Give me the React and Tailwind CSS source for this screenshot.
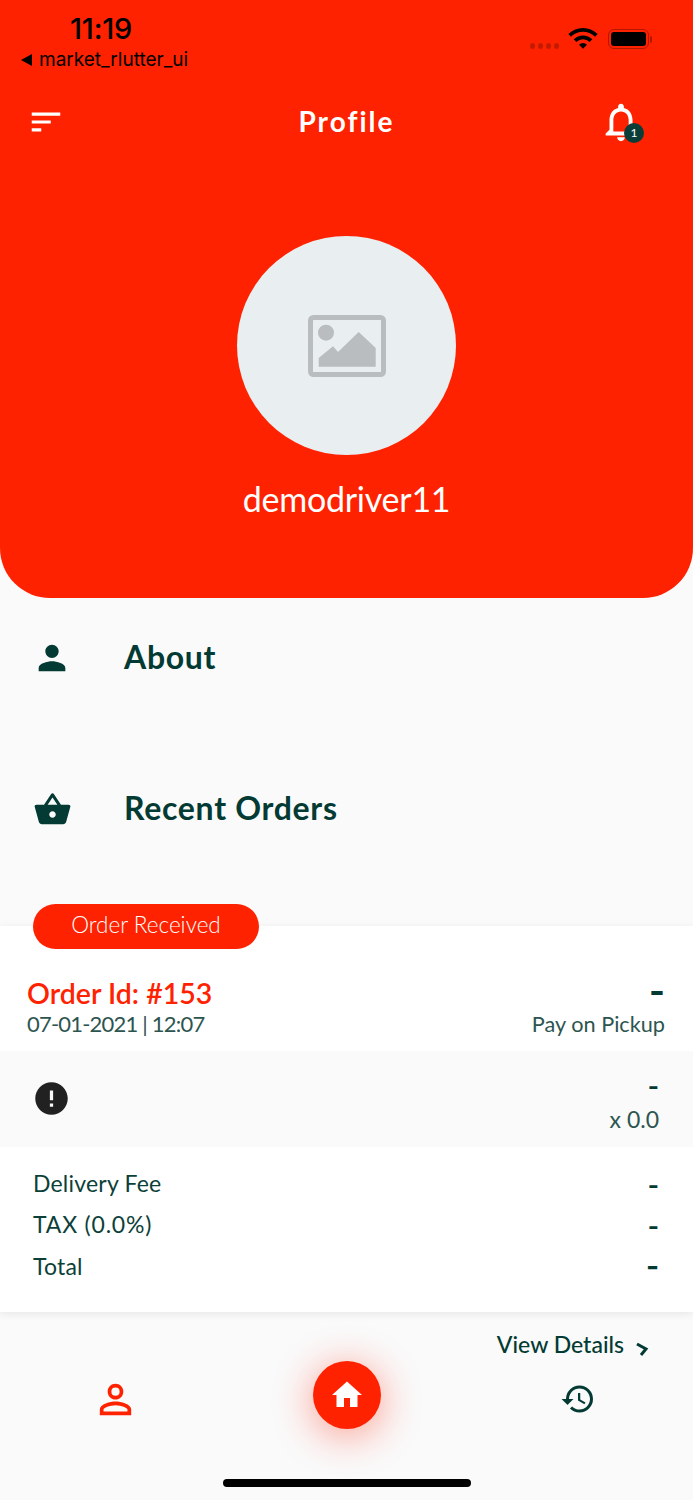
import React from 'react';
import {
  MdPerson,
  MdShoppingBasket,
  MdError,
  MdPersonOutline,
  MdHome,
  MdHistory,
  MdSort,
  MdWifi,
  MdOutlineNotifications,
} from 'react-icons/md';

const StatusBar = () => {
  return (
    <div className="h-[83px] flex justify-between pl-[21px] pr-[41px] text-black">
      <div className="flex flex-col">
        <div className="pl-[49px] pt-[13px] font-['Inter',sans-serif] text-[29px] leading-[32px] font-medium tracking-[-0.2px]">11:19</div>
        <div className="flex items-center gap-[7px] mt-[4px]">
          <div className="w-0 h-0 border-y-[6px] border-y-transparent border-r-[11px] border-r-black"></div>
          <span className="font-['Inter',sans-serif] text-[19px] leading-[22px]">market_rlutter_ui</span>
        </div>
      </div>
      <div className="flex items-start pt-[25px]">
        <div className="flex gap-[3px] mt-[18px] mr-[10px]">
          <div className="w-[5px] h-[6px] rounded-full bg-[#c41b00]"></div>
          <div className="w-[5px] h-[6px] rounded-full bg-[#c41b00]"></div>
          <div className="w-[5px] h-[6px] rounded-full bg-[#c41b00]"></div>
          <div className="w-[5px] h-[6px] rounded-full bg-[#c41b00]"></div>
        </div>
        <MdWifi className="w-[32px] h-[32px] -mt-[3px] -ml-[2px] mr-[9px]" />
        <div className="flex items-center mt-[4px]">
          <div className="w-[41px] h-[20px] rounded-[6px] border border-[#b01800] p-[2px]">
            <div className="w-full h-full rounded-[3px] bg-black"></div>
          </div>
          <div className="w-[2px] h-[7px] ml-[1px] rounded-r bg-[#b01800]"></div>
        </div>
      </div>
    </div>
  );
};

const PlaceholderImage = () => {
  return (
    <svg viewBox="0 0 78 62" className="w-[78px] h-[62px] text-[#b9bdbf]" fill="currentColor">
      <rect x="2.5" y="2.5" width="73" height="57" rx="3" fill="none" stroke="currentColor" strokeWidth="5" />
      <circle cx="18" cy="17.7" r="8" />
      <polygon points="10.7,51.7 10.7,43 25,31.3 30,37 50.7,17 67.7,33 67.7,51.7" />
    </svg>
  );
};

const Header = () => {
  return (
    <div className="h-[598px] bg-[#ff2200] rounded-b-[50px] flex flex-col">
      <StatusBar />
      <div className="grid grid-cols-[1fr_auto_1fr] items-center h-[78px] px-[27px]">
        <MdSort className="w-[38px] h-[38px] text-white" />
        <div className="font-['Lato',sans-serif] text-[28px] font-bold text-white tracking-[2px] -translate-y-[1px]">Profile</div>
        <div className="relative justify-self-end mr-[22px]">
          <MdOutlineNotifications className="w-[46px] h-[46px] text-white" />
          <div className="absolute left-[26px] top-[24px] w-[20px] h-[20px] rounded-full bg-[#0a3d38] flex items-center justify-center font-['Lato',sans-serif] text-[12px] text-white">1</div>
        </div>
      </div>
      <div className="flex flex-col items-center mt-[75px]">
        <div className="w-[219px] h-[219px] rounded-full bg-[#e9eef1] flex items-center justify-center">
          <PlaceholderImage />
        </div>
        <div className="mt-[19px] font-['Lato',sans-serif] text-[34px] leading-[50px] tracking-[-0.25px] text-white">demodriver11</div>
      </div>
    </div>
  );
};

const SectionRow = ({ icon, title, className }) => {
  return (
    <div className={`flex items-center h-[60px] ${className}`}>
      <div className="w-[124px] flex justify-center pr-[20px]">{icon}</div>
      <div className="font-['Lato',sans-serif] text-[32px] font-bold tracking-[0.7px] -translate-y-[1px] text-[#033a33]">{title}</div>
    </div>
  );
};

const Dash = ({ className }) => {
  return <span className={`font-['Inter',sans-serif] font-bold text-[#033a33] ${className}`}>-</span>;
};

const FeeRow = ({ label, bold, dashClass, labelClass }) => {
  return (
    <div className="flex justify-between items-center h-[41.5px]">
      <span className={`font-['Lato',sans-serif] text-[23px] text-[#0d3f39] ${labelClass}`}>{label}</span>
      <Dash className={`${bold ? 'text-[28px]' : 'text-[24px]'} ${dashClass}`} />
    </div>
  );
};

const OrderCard = () => {
  return (
    <div>
      <div className="relative z-10 ml-[33px] w-[226px] h-[45px] pb-[4px] rounded-full bg-[#ff2200] flex items-center justify-center font-['Lato',sans-serif] text-[22.5px] font-light text-white -mb-[23px]">
        Order Received
      </div>
      <div className="bg-white shadow-[0_2px_8px_rgba(0,0,0,0.08)]">
        <div className="h-[125px] flex justify-between pl-[27px] pr-[28px] pt-[48px]">
          <div>
            <div className="font-['Lato',sans-serif] text-[28.5px] leading-[38px] font-semibold text-[#ff2200]">Order Id: #153</div>
            <div className="font-['Lato',sans-serif] text-[22px] leading-[24px] tracking-[-0.8px] text-[#2d5550]">07-01-2021 | 12:07</div>
          </div>
          <div className="flex flex-col items-end">
            <Dash className="text-[34px] leading-[36px] -translate-y-[1px]" />
            <div className="font-['Lato',sans-serif] text-[21.7px] leading-[30px] text-[#2d5550] -mt-[1px]">Pay on Pickup</div>
          </div>
        </div>
        <div className="h-[96px] bg-[#fafafa] flex items-center justify-between pl-[32px] pr-[34px]">
          <MdError className="w-[39px] h-[39px] text-[#212121] -translate-y-[1px]" />
          <div className="flex flex-col items-end pt-[10px]">
            <Dash className="text-[24px] leading-[32px] -translate-y-[1px]" />
            <div className="font-['Lato',sans-serif] text-[23px] leading-[34px] text-[#2d5550] -mt-[2px]">x 0.0</div>
          </div>
        </div>
        <div className="h-[165px] pl-[33px] pr-[34px] pt-[15px]">
          <FeeRow label="Delivery Fee" labelClass="tracking-[0.2px]" dashClass="translate-y-[3px]" />
          <FeeRow label="TAX (0.0%)" labelClass="tracking-[0.8px]" dashClass="translate-y-[3px]" />
          <FeeRow label="Total" labelClass="tracking-[0.2px]" bold />
        </div>
      </div>
    </div>
  );
};

const BottomNav = () => {
  return (
    <div className="flex flex-col">
      <div className="flex justify-end items-center h-[65px] pr-[43px]">
        <span className="font-['Lato',sans-serif] text-[23px] font-medium text-[#033a33]">View Details</span>
        <svg viewBox="0 0 14 14" className="w-[14px] h-[14px] ml-[12px] mt-[8px] text-[#033a33]" fill="none" stroke="currentColor" strokeWidth="3">
          <path d="M1 2 L10 7 L5 13" />
        </svg>
      </div>
      <div className="grid grid-cols-3 justify-items-center items-center -mt-[16px]">
        <MdPersonOutline className="w-[47px] h-[47px] mt-[8px] text-[#ff2200]" />
        <div className="w-[68px] h-[68px] rounded-full bg-[#ff2200] flex items-center justify-center shadow-[0_6px_40px_rgba(255,34,0,0.45)]">
          <MdHome className="w-[36px] h-[36px] text-white" />
        </div>
        <MdHistory className="w-[36px] h-[36px] mt-[8px] text-[#033a33]" />
      </div>
      <div className="mx-auto mt-[50px] w-[248px] h-[8px] rounded-full bg-black"></div>
    </div>
  );
};

export default function App() {
  return (
    <div className="w-[693px] h-[1500px] overflow-hidden bg-[#fafafa]">
      <Header />
      <SectionRow
        className="mt-[30px]"
        icon={<MdPerson className="w-[40px] h-[40px] text-[#033a33]" />}
        title="About"
      />
      <SectionRow
        className="mt-[91px]"
        icon={<MdShoppingBasket className="w-[39px] h-[39px] text-[#033a33]" />}
        title="Recent Orders"
      />
      <div className="mt-[65px]">
        <OrderCard />
      </div>
      <BottomNav />
    </div>
  );
}
